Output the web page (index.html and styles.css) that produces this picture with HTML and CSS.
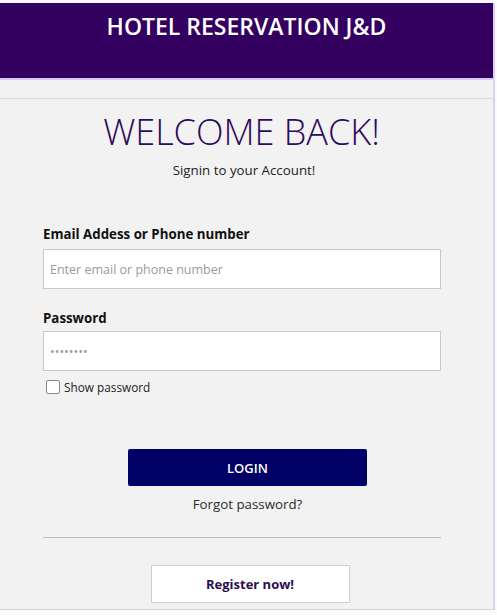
FILE: index.html
```html
<!DOCTYPE html>
<html>
<head>
<meta charset="utf-8">
<link rel="stylesheet" href="styles.css">
</head>
<body>
<div class="page">
  <header class="topbar">
    <h1 class="brand">HOTEL RESERVATION J&amp;D</h1>
  </header>
  <div class="spacer"></div>
  <main class="content">
    <h2 class="welcome">WELCOME BACK!</h2>
    <p class="subtitle">Signin to your Account!</p>
    <form class="form">
      <label class="label" for="email">Email Addess or Phone number</label>
      <input class="field" id="email" type="text" placeholder="Enter email or phone number">
      <label class="label label-pw" for="pw">Password</label>
      <input class="field field-pw" id="pw" type="password" placeholder="••••••••">
      <label class="show"><span class="box"></span>Show password</label>
      <div class="actions">
        <button type="button" class="login">LOGIN</button>
        <a class="forgot">Forgot password?</a>
      </div>
      <hr class="rule">
      <div class="actions">
        <button type="button" class="register">Register now!</button>
      </div>
    </form>
  </main>
</div>
</body>
</html>
```
FILE: styles.css
```css
html, body {
  margin: 0;
  padding: 0;
  background: #fbfbfb;
}
body {
  font-family: "Open Sans", "Noto Sans", sans-serif;
  color: #222;
}
.page {
  margin-top: 3px;
  width: 495px;
  height: 607px;
  box-sizing: border-box;
  background: #f2f2f2;
  border-right: 2px solid #dccdf3;
  border-bottom: 1px solid #d6d6d6;
  display: flex;
  flex-direction: column;
}
.topbar {
  height: 75px;
  background: #33005f;
  border-bottom: 2px solid #d9c8f5;
  box-sizing: content-box;
}
.brand {
  margin: 0;
  padding-top: 7px;
  text-align: center;
  color: #fff;
  font-size: 23px;
  font-weight: 600;
  line-height: 32px;
  letter-spacing: 0;
}
.spacer {
  height: 18px;
  border-bottom: 1px solid #dcdcdc;
}
.content {
  display: flex;
  flex-direction: column;
}
.welcome {
  margin: 11px 0 0;
  text-align: center;
  font-weight: 300;
  font-size: 36px;
  line-height: 44px;
  color: #2d0a5c;
  padding-right: 10px;
}
.subtitle {
  margin: 7px 0 0;
  text-align: center;
  font-size: 13.3px;
  line-height: 18px;
  color: #222;
  padding-right: 5px;
}
.form {
  display: flex;
  flex-direction: column;
  padding-left: 43px;
  width: 398px;
  margin-top: 46px;
}
.label {
  font-weight: 700;
  font-size: 13.3px;
  line-height: 18px;
  color: #111;
}
.label-pw {
  margin-top: 20px;
}
.field {
  margin-top: 6px;
  height: 40px;
  box-sizing: border-box;
  border: 1px solid #c9c9c9;
  background: #fff;
  padding: 0 6px;
  font-family: inherit;
  font-size: 12.5px;
  outline: none;
}
.field-pw {
  margin-top: 4px;
}
.field::placeholder {
  color: #9a9a9a;
}
.show {
  margin-top: 7px;
  margin-left: 3px;
  display: flex;
  align-items: center;
  gap: 4px;
  font-size: 11.8px;
  line-height: 18px;
  color: #222;
}
.box {
  width: 12px;
  height: 12px;
  border: 1px solid #8a8a8a;
  border-radius: 2px;
  background: #fff;
}
.actions {
  display: flex;
  flex-direction: column;
  align-items: center;
  margin-left: -43px;
  width: 495px;
}
.login {
  margin-top: 53px;
  width: 239px;
  height: 37px;
  background: #000066;
  color: #fff;
  border: none;
  border-radius: 2px;
  font-family: inherit;
  font-weight: 600;
  font-size: 13px;
}
.forgot {
  margin-top: 9px;
  font-size: 13.3px;
  line-height: 18px;
  color: #2a2a2a;
}
.rule {
  margin: 24px 0 0;
  width: 398px;
  border: none;
  border-top: 1px solid #bdbdbd;
  height: 0;
}
.register {
  margin-top: 27px;
  margin-left: 5px;
  width: 199px;
  height: 38px;
  background: #fff;
  border: 1px solid #cfcfcf;
  font-family: inherit;
  font-weight: 700;
  font-size: 13px;
  color: #2b0d4f;
}
```
